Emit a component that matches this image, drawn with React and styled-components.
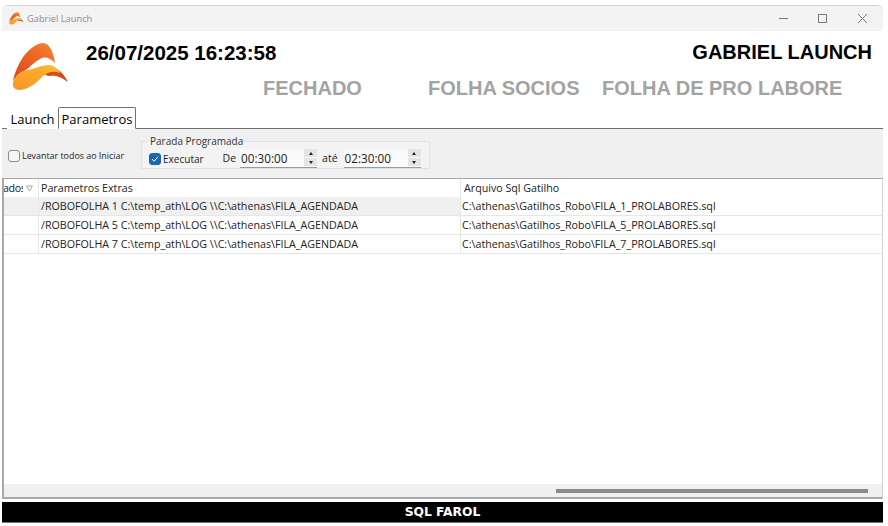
import React from "react";
import styled, { createGlobalStyle } from "styled-components";

const GlobalStyle = createGlobalStyle`
  html, body {
    margin: 0;
    padding: 0;
    background: #fff;
  }
`;

const Page = styled.div`
  width: 888px;
  height: 526px;
  box-sizing: border-box;
  padding: 6px 5px 3px 2px;
  font-family: "Liberation Sans", Arial, sans-serif;
  overflow: hidden;
`;

const Frame = styled.div`
  height: 100%;
  display: flex;
  flex-direction: column;
  border-radius: 6px 6px 0 0;
  box-shadow: 0 -1px 0 #d4d4d4;
`;

const TitleBar = styled.div`
  flex: 0 0 25px;
  display: flex;
  align-items: center;
  padding-left: 7px;
  background: #f3f3f3;
  border-radius: 6px 6px 0 0;
`;

const TitleText = styled.span`
  margin-left: 3px;
  font-size: 9.3px;
  color: #8c8c8c;
  font-family: "Open Sans", sans-serif;
`;

const WinControls = styled.div`
  margin-left: auto;
  display: flex;
  margin-right: 1px;
`;

const WinButton = styled.div`
  width: 39.5px;
  height: 25px;
  display: flex;
  align-items: center;
  justify-content: center;
`;

const Header = styled.div`
  flex: 0 0 76px;
  display: flex;
  background: #fff;
`;

const LogoCell = styled.div`
  flex: 0 0 84px;
  padding: 11px 0 0 10px;
  box-sizing: border-box;
`;

const HeaderMain = styled.div`
  flex: 1;
  display: flex;
  flex-direction: column;
`;

const TopLine = styled.div`
  display: flex;
  justify-content: space-between;
  padding: 10px 11px 0 0;
  color: #000;
  font-weight: 700;
  font-size: 20px;
  line-height: 23px;
`;

const DateText = styled.span`
  font-size: 20.5px;
`;

const StatusLine = styled.div`
  display: flex;
  margin-top: 12px;
  padding-left: 177px;
  font-size: 20px;
  line-height: 24px;
  font-weight: 700;
  color: #a3a3a3;
`;

const Status = styled.span`
  flex: 0 0 ${(p) => p.$w}px;
  white-space: nowrap;
`;

const TabRow = styled.div`
  flex: 0 0 22px;
  display: flex;
  align-items: flex-end;
  border-bottom: 1px solid #6f6f6f;
  box-sizing: border-box;
  padding-left: 5px;
  font-family: "Open Sans", sans-serif;
  font-size: 13px;
`;

const Tab = styled.div`
  box-sizing: border-box;
  height: ${(p) => (p.$active ? 22 : 19)}px;
  width: ${(p) => p.$w}px;
  margin-bottom: -1px;
  text-align: center;
  line-height: ${(p) => (p.$active ? 22 : 18)}px;
  color: #000;
  background: #fff;
  ${(p) =>
    p.$active &&
    "border: 1px solid #6f6f6f; border-bottom: 1px solid #fff; border-radius: 2px 2px 0 0;"}
`;

const Toolbar = styled.div`
  flex: 0 0 49px;
  display: flex;
  align-items: center;
  box-sizing: border-box;
  padding: 0 0 0 6px;
  background: #f0f0f0;
`;

const CheckLabel = styled.label`
  display: flex;
  align-items: center;
  gap: 2px;
  margin-top: ${(p) => p.$top ?? 0}px;
  font-family: "Open Sans", sans-serif;
  font-size: ${(p) => p.$size}px;
  color: #222;
  white-space: nowrap;
`;

const Box = styled.span`
  box-sizing: border-box;
  width: 12px;
  height: 12px;
  border-radius: 3px;
  display: flex;
  align-items: center;
  justify-content: center;
  background: ${(p) => (p.$checked ? "#1a66b5" : "#f6f6f6")};
  border: 1px solid ${(p) => (p.$checked ? "#1a66b5" : "#8a8a8a")};
`;

const GroupBox = styled.fieldset`
  margin: -3px 0 0 17px;
  padding: 0 0 0 7px;
  width: 289px;
  height: 34px;
  box-sizing: border-box;
  background: #f3f3f3;
  border: 1px solid #e2e2e2;
  display: flex;
  align-items: center;
`;

const Legend = styled.legend`
  padding: 0 1px;
  font-family: "Open Sans", sans-serif;
  font-size: 10px;
  line-height: 13px;
  color: #333;
`;

const FieldText = styled.span`
  font-family: "Open Sans", sans-serif;
  font-size: 10.5px;
  color: #222;
  margin: 0 ${(p) => p.$right}px 0 ${(p) => p.$left}px;
`;

const TimeBox = styled.div`
  box-sizing: border-box;
  width: ${(p) => p.$w}px;
  height: 19px;
  display: flex;
  align-items: center;
  justify-content: space-between;
  background: #fafafa;
  border-bottom: 1px solid #9a9a9a;
  padding: 0 0 0 1px;
  font-family: "Open Sans", sans-serif;
  font-size: 11.7px;
  color: #222;
`;

const Spin = styled.div`
  width: 13px;
  height: 17px;
  display: flex;
  flex-direction: column;
  gap: 1px;
`;

const SpinPart = styled.div`
  flex: 1;
  background: #e4e4e4;
  display: flex;
  align-items: center;
  justify-content: center;
  font-size: 0;
  &::after {
    content: "";
    border-left: 2.5px solid transparent;
    border-right: 2.5px solid transparent;
    ${(p) => (p.$down ? "border-top: 3px solid #222;" : "border-bottom: 3px solid #222;")}
  }
`;

const TablePanel = styled.div`
  flex: 0 0 321px;
  box-sizing: border-box;
  display: flex;
  flex-direction: column;
  background: #fff;
  border: 1px solid #a8a8ad;
  border-left-width: 2px;
  border-right-color: #d0d0d0;
  border-bottom-width: 2px;
`;

const TableBody = styled.div`
  flex: 1;
  min-height: 0;
`;

const Row = styled.div`
  display: grid;
  grid-template-columns: 35px 422px 1fr;
  height: ${(p) => (p.$head ? 18 : 19)}px;
  box-sizing: border-box;
  border-bottom: ${(p) => (p.$head ? "0" : "1px solid #e6e6e6")};
  font-family: "Open Sans", sans-serif;
  font-size: 10.7px;
  line-height: 18px;
  color: #222;
`;

const Cell = styled.div`
  padding-left: ${(p) => p.$pad ?? 2}px;
  border-right: 1px solid #e6e6e6;
  white-space: nowrap;
  overflow: hidden;
  background: ${(p) => (p.$shade ? "#f0f0f0" : "transparent")};
  display: flex;
  align-items: center;
  &:last-child {
    border-right: 0;
  }
`;

const ClippedHead = styled.div`
  border-right: 1px solid #e6e6e6;
  overflow: hidden;
  display: flex;
  align-items: center;
  white-space: nowrap;
`;

// the column is narrower than its title, so the word is cut as in the grid
const HeadText = styled.span`
  flex: 0 0 20px;
  overflow: hidden;
  margin: 0 3px 0 -1px;
  letter-spacing: -0.4px;
`;

const SortMark = styled.svg`
  flex: 0 0 7px;
`;

const ScrollTrack = styled.div`
  flex: 0 0 13px;
  background: #f0f0f0;
  display: flex;
  align-items: center;
  padding-left: 552px;
`;

const ScrollThumb = styled.div`
  width: 312px;
  height: 4px;
  background: #8a8a8a;
`;

const Footer = styled.div`
  margin-top: 3px;
  flex: 0 0 21px;
  box-sizing: border-box;
  background: #000;
  border-bottom: 1px solid #777;
  color: #fff;
  text-align: center;
  font-family: "DejaVu Sans", sans-serif;
  font-weight: 700;
  font-size: 12.3px;
  line-height: 20px;
`;

const Logo = ({ size }) => (
  <svg width={size} height={size * 0.84} viewBox="12 42 57 48">
    <defs>
      <linearGradient id="upperBand" x1="0" y1="1" x2="1" y2="0">
        <stop offset="0" stopColor="#d8431b" />
        <stop offset="0.55" stopColor="#ee6424" />
        <stop offset="1" stopColor="#f58634" />
      </linearGradient>
      <linearGradient id="lowerBand" x1="0" y1="1" x2="1" y2="0">
        <stop offset="0" stopColor="#f9962a" />
        <stop offset="0.7" stopColor="#fbab2c" />
        <stop offset="1" stopColor="#f7c43e" />
      </linearGradient>
    </defs>
    <path
      d="M13 81 C16 66 27 45 43 43 C50 43 54 54 55 63 C50 58 45 56 40 59 C33 63 29 68 26 70 C21 72 17 75 13 81 Z"
      fill="url(#upperBand)"
    />
    <path
      d="M47 66 C56 66 64 73 68 82 C62 78 57 75 50 76 C44 76 42 72 47 66 Z"
      fill="#d9481e"
    />
    <path
      d="M13 83 C14 76 20 71 28 70 C36 69 46 63 53 66 C57 68 60 71 60 73 C52 70 46 73 40 79 C33 86 26 90 19 90 C15 90 12 87 13 83 Z"
      fill="url(#lowerBand)"
    />
  </svg>
);

const Check = () => (
  <svg width="8" height="8" viewBox="0 0 8 8">
    <path d="M1 4.2 L3.2 6.2 L7 1.8" fill="none" stroke="#fff" strokeWidth="1" />
  </svg>
);

const WinIcon = ({ d }) => (
  <svg width="11" height="11" viewBox="0 0 11 11">
    <path d={d} fill="none" stroke="#777" strokeWidth="1" />
  </svg>
);

const TimeField = ({ value, w }) => (
  <TimeBox $w={w}>
    {value}
    <Spin>
      <SpinPart />
      <SpinPart $down />
    </Spin>
  </TimeBox>
);

const rows = [
  { n: 1, shade: true },
  { n: 5, shade: false },
  { n: 7, shade: false },
];

export default function App() {
  return (
    <Page>
      <GlobalStyle />
      <Frame>
        <TitleBar>
          <Logo size={15} />
          <TitleText>Gabriel Launch</TitleText>
          <WinControls>
            <WinButton>
              <WinIcon d="M1 5.5 H10" />
            </WinButton>
            <WinButton>
              <WinIcon d="M1.5 1.5 H9.5 V9.5 H1.5 Z" />
            </WinButton>
            <WinButton>
              <WinIcon d="M1 1 L10 10 M10 1 L1 10" />
            </WinButton>
          </WinControls>
        </TitleBar>

        <Header>
          <LogoCell>
            <Logo size={57} />
          </LogoCell>
          <HeaderMain>
            <TopLine>
              <DateText>26/07/2025 16:23:58</DateText>
              <span>GABRIEL LAUNCH</span>
            </TopLine>
            <StatusLine>
              <Status $w={165}>FECHADO</Status>
              <Status $w={174}>FOLHA SOCIOS</Status>
              <Status $w={240}>FOLHA DE PRO LABORE</Status>
            </StatusLine>
          </HeaderMain>
        </Header>

        <TabRow>
          <Tab $w={51}>Launch</Tab>
          <Tab $w={78} $active>
            Parametros
          </Tab>
        </TabRow>

        <Toolbar>
          <CheckLabel $size={8.9} $top={4}>
            <Box />
            Levantar todos ao Iniciar
          </CheckLabel>
          <GroupBox>
            <Legend>Parada Programada</Legend>
            <CheckLabel $size={10} $top={2}>
              <Box $checked>
                <Check />
              </Box>
              Executar
            </CheckLabel>
            <FieldText $left={19} $right={4}>
              De
            </FieldText>
            <TimeField value="00:30:00" w={77} />
            <FieldText $left={5} $right={6}>
              até
            </FieldText>
            <TimeField value="02:30:00" w={77} />
          </GroupBox>
        </Toolbar>

        <TablePanel>
          <TableBody>
            <Row $head>
              <ClippedHead>
                <HeadText>ados</HeadText>
                <SortMark width="7" height="7" viewBox="0 0 7 7">
                  <path d="M0.5 1 H6.5 L3.5 6 Z" fill="none" stroke="#aaa" />
                </SortMark>
              </ClippedHead>
              <Cell>Parametros Extras</Cell>
              <Cell $pad={3}>Arquivo Sql Gatilho</Cell>
            </Row>
            {rows.map((r) => (
              <Row key={r.n}>
                <Cell $shade={r.shade} />
                <Cell $shade={r.shade}>
                  {`/ROBOFOLHA ${r.n} C:\\temp_ath\\LOG \\\\C:\\athenas\\FILA_AGENDADA`}
                </Cell>
                <Cell $pad={1}>{`C:\\athenas\\Gatilhos_Robo\\FILA_${r.n}_PROLABORES.sql`}</Cell>
              </Row>
            ))}
          </TableBody>
          <ScrollTrack>
            <ScrollThumb />
          </ScrollTrack>
        </TablePanel>

        <Footer>SQL FAROL</Footer>
      </Frame>
    </Page>
  );
}
